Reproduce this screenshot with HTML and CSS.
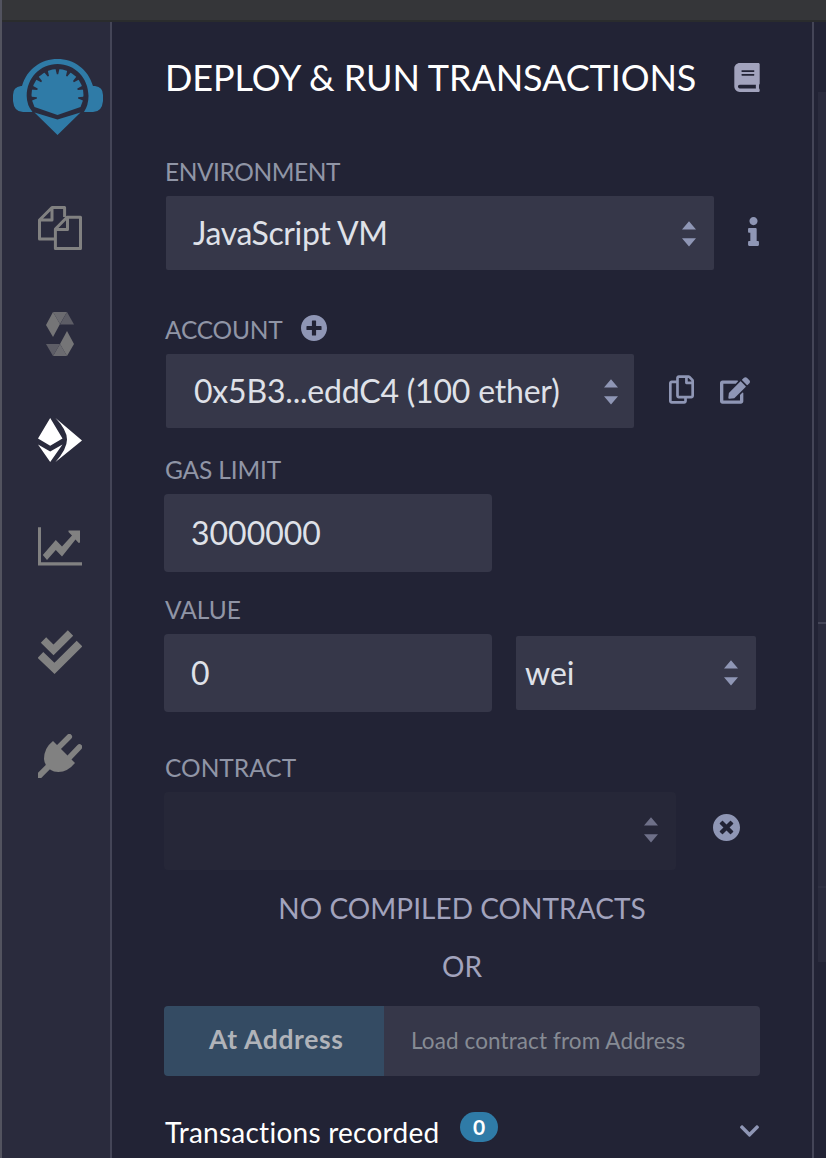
FILE: index.html
```
<!DOCTYPE html>
<html lang="en">
<head>
<meta charset="utf-8">
<title>Deploy &amp; Run Transactions</title>
<link rel="stylesheet" href="styles.css">
</head>
<body>
<svg class="defs" width="0" height="0">
  <defs>
    <symbol id="arrows" viewBox="0 0 14 26"><path d="M0 8.600L7 .2l7 8.400zM0 17.200h14L7 25.600z"/></symbol>
  </defs>
</svg>
<div class="app">
  <div class="topbar"></div>
  <div class="main">
    <nav class="sidebar">
      <svg class="logo" viewBox="0 0 90 77">
        <path d="M9 27C14 10 28 0 44.500 0S75 10 80 27h2q8 1 8 9v6q-1 11-10 11h-9q4.500-7 4.500-16C75.500 19 62 5 44.500 5S13.700 19 13.700 37q0 9 5.800 16H10Q1 53 0 42v-6q0-8 8-9z"/>
        <path d="M21.500 48Q18.500 42 18.500 36a26 26 0 0 1 52 0q0 6-3 12L44.500 56z"/>
        <path d="M21.500 53.500l23 7 23-7-23 22.500z"/>
        <g class="notches">
          <path id="n" d="M42.100 8h4.800l-1.700 7.200h-1.400z"/>
          <use href="#n" transform="rotate(26 44.500 36)"/><use href="#n" transform="rotate(-26 44.500 36)"/>
          <use href="#n" transform="rotate(50 44.500 36)"/><use href="#n" transform="rotate(-50 44.500 36)"/>
          <use href="#n" transform="rotate(74 44.500 36)"/><use href="#n" transform="rotate(-74 44.500 36)"/>
          <use href="#n" transform="rotate(98 44.500 36)"/><use href="#n" transform="rotate(-98 44.500 36)"/>
        </g>
      </svg>
      <svg class="nav" viewBox="0 0 44 44"><g fill="none" stroke="#818181" stroke-width="3" stroke-linejoin="round"><path d="M17 33H1.500V14L14 1.500h12.600V11M14 1.500V14H1.500"/><path d="M17.400 23L29 11.200h13.500v31.300H17.400zM29.500 11.200V23.500H17.400"/></g></svg>
      <svg class="nav" viewBox="0 0 44 44"><path fill="#757577" d="M15 0L22 12 15 25 8 13z"/><path fill="#6b6b70" d="M15 0h14l-7 12z"/><path fill="#5d5d66" d="M29 0l7 12.500H22z"/><path fill="#757577" d="M29 19l7 13-7 12-7-12z"/><path fill="#6b6b70" d="M22 32l7 12H15z"/><path fill="#5d5d66" d="M8 32h14l-7 12z"/></svg>
      <svg class="nav" viewBox="0 0 44 44"><path fill="#fff" d="M12.200 0L24.500 20.500l-12.300 7.300L0 20.500zM0 26.500l12.200 7L24.500 26.500 12.200 44zM17.500 0L44 22.400 17.500 44Q29 31 29 21.500T17.500 0z"/></svg>
      <svg class="nav" viewBox="0 0 44 44"><path fill="#818181" d="M0 3.300h3V38.300H44V41.500H0zM4.800 31L17.800 16l6.200 6.500L34 11.500 30.500 8V6.500H42V18.500l-1.300.5-3.200-3.500L24 32.500l-6.200-6.500L9 36z"/></svg>
      <svg class="nav nav-check" viewBox="0 0 44 44"><path fill="none" stroke="#818181" stroke-width="7.600" stroke-linejoin="miter" d="M5.500 10L15.500 20 32.500 3"/><path fill="none" stroke="#818181" stroke-width="8" d="M2.500 25L16.500 38.400 41.500 13.500"/></svg>
      <svg class="nav" viewBox="0 0 44 44"><path fill="none" stroke="#818181" stroke-width="5.500" stroke-linecap="round" d="M21 13L31.300 2.700M31.500 23.500L41.500 13"/><path fill="none" stroke="#818181" stroke-width="6" d="M-1 44L13 30"/><path fill="#818181" d="M15 7L37 29Q28 40 16 37.500 7 34 6 25 6 14 15 7z"/></svg>
    </nav>
    <main class="panel">
      <header class="head">
        <h1 class="title"><span class="t-title">DEPLOY &amp; RUN TRANSACTIONS</span></h1>
        <svg class="book" viewBox="0 0 448 512"><path d="M448 360V24c0-13.300-10.700-24-24-24H96C43 0 0 43 0 96v320c0 53 43 96 96 96h328c13.300 0 24-10.700 24-24v-16c0-7.500-3.500-14.300-8.900-18.700-4.200-15.400-4.200-59.300 0-74.700 5.400-4.300 8.900-11.100 8.900-18.600zM128 134c0-3.300 2.700-6 6-6h212c3.300 0 6 2.700 6 6v20c0 3.300-2.700 6-6 6H134c-3.300 0-6-2.700-6-6v-20zm0 64c0-3.300 2.700-6 6-6h212c3.300 0 6 2.700 6 6v20c0 3.300-2.700 6-6 6H134c-3.300 0-6-2.700-6-6v-20zm253.400 250H96c-17.700 0-32-14.300-32-32 0-17.600 14.400-32 32-32h285.400c-1.900 17.100-1.900 46.900 0 64z"/></svg>
      </header>

      <div class="label label-env"><span class="t-env">ENVIRONMENT</span></div>
      <div class="row">
        <div class="select select-env"><span class="t-js">JavaScript VM</span><svg class="arrows"><use href="#arrows"/></svg></div>
        <svg class="info" viewBox="0 0 192 512"><path d="M20 424.229h20V279.771H20c-11.046 0-20-8.954-20-20V212c0-11.046 8.954-20 20-20h112c11.046 0 20 8.954 20 20v212.229h20c11.046 0 20 8.954 20 20V492c0 11.046-8.954 20-20 20H20c-11.046 0-20-8.954-20-20v-47.771c0-11.046 8.954-20 20-20zM96 0C56.235 0 24 32.235 24 72s32.235 72 72 72 72-32.235 72-72S135.764 0 96 0z"/></svg>
      </div>

      <div class="label label-account"><span class="t-acc">ACCOUNT</span>
        <svg class="plus" viewBox="8 8 496 496"><path d="M256 8C119 8 8 119 8 256s111 248 248 248 248-111 248-248S393 8 256 8zm144 276c0 6.600-5.400 12-12 12h-92v92c0 6.600-5.400 12-12 12h-56c-6.600 0-12-5.400-12-12v-92h-92c-6.600 0-12-5.400-12-12v-56c0-6.600 5.400-12 12-12h92v-92c0-6.600 5.400-12 12-12h56c6.600 0 12 5.400 12 12v92h92c6.600 0 12 5.400 12 12v56z"/></svg>
      </div>
      <div class="row">
        <div class="select select-account"><span class="t-addr">0x5B3...eddC4 (100 ether)</span><svg class="arrows"><use href="#arrows"/></svg></div>
        <svg class="copy" viewBox="0 0 448 512"><path d="M433.941 65.941l-51.882-51.882A48 48 0 0 0 348.118 0H176c-26.510 0-48 21.490-48 48v48H48c-26.510 0-48 21.490-48 48v320c0 26.510 21.490 48 48 48h224c26.510 0 48-21.490 48-48v-48h80c26.510 0 48-21.490 48-48V99.882a48 48 0 0 0-14.059-33.941zM266 464H54a6 6 0 0 1-6-6V150a6 6 0 0 1 6-6h74v224c0 26.510 21.490 48 48 48h96v42a6 6 0 0 1-6 6zm128-96H182a6 6 0 0 1-6-6V54a6 6 0 0 1 6-6h106v88c0 13.255 10.745 24 24 24h88v202a6 6 0 0 1-6 6zm6-256h-64V48h9.632c1.591 0 3.117.632 4.243 1.757l48.368 48.368a6 6 0 0 1 1.757 4.243V112z"/></svg>
        <svg class="edit" viewBox="0 0 576 512"><path d="M402.600 83.200l90.200 90.200c3.800 3.800 3.800 10 0 13.800L274.400 405.600l-92.800 10.300c-12.400 1.400-22.900-9.100-21.500-21.500l10.300-92.800L388.800 83.200c3.800-3.800 10-3.800 13.800 0zm162-22.900l-48.800-48.800c-15.200-15.200-39.900-15.200-55.200 0l-35.400 35.400c-3.800 3.800-3.800 10 0 13.800l90.200 90.200c3.800 3.800 10 3.800 13.800 0l35.400-35.400c15.200-15.300 15.200-40 0-55.200zM384 346.200V448H64V128h229.800c3.200 0 6.200-1.300 8.500-3.500l40-40c7.600-7.600 2.200-20.500-8.500-20.500H48C21.500 64 0 85.500 0 112v352c0 26.500 21.500 48 48 48h352c26.500 0 48-21.500 48-48V306.200c0-10.700-12.900-16-20.500-8.500l-40 40c-2.200 2.300-3.500 5.300-3.500 8.500z"/></svg>
      </div>

      <div class="label label-gas"><span class="t-gas">GAS LIMIT</span></div>
      <div class="input"><span class="t-3m">3000000</span></div>

      <div class="label label-value"><span class="t-val">VALUE</span></div>
      <div class="row">
        <div class="input"><span>0</span></div>
        <div class="select select-unit"><span class="t-wei">wei</span><svg class="arrows"><use href="#arrows"/></svg></div>
      </div>

      <div class="label label-contract"><span class="t-con">CONTRACT</span></div>
      <div class="row">
        <div class="select select-contract"><svg class="arrows"><use href="#arrows"/></svg></div>
        <svg class="clear" viewBox="8 8 496 496"><path d="M256 8C119 8 8 119 8 256s111 248 248 248 248-111 248-248S393 8 256 8zm121.600 313.100c4.700 4.700 4.700 12.300 0 17L338 377.600c-4.700 4.700-12.300 4.700-17 0L256 312l-65.100 65.600c-4.700 4.700-12.300 4.700-17 0L134.400 338c-4.700-4.700-4.700-12.300 0-17l65.600-65-65.600-65.100c-4.700-4.700-4.700-12.300 0-17l39.600-39.600c4.700-4.700 12.300-4.700 17 0l65 65.700 65.100-65.600c4.700-4.700 12.300-4.700 17 0l39.600 39.600c4.700 4.700 4.700 12.300 0 17L312 256l65.600 65.100z"/></svg>
      </div>
      <div class="notes"><div class="note"><span class="t-no">NO COMPILED CONTRACTS</span></div><div class="note"><span class="t-or">OR</span></div></div>

      <div class="at">
        <div class="at-button"><span class="t-at">At Address</span></div>
        <div class="at-input"><span class="t-load">Load contract from Address</span></div>
      </div>

      <div class="recorded">
        <span class="t-rec">Transactions recorded</span>
        <span class="badge">0</span>
        <svg class="chevron" viewBox="5 123 438 266"><path d="M207.029 381.476L12.686 187.132c-9.373-9.373-9.373-24.569 0-33.941l22.667-22.667c9.357-9.357 24.522-9.375 33.901-.04L224 284.505l154.745-154.021c9.379-9.335 24.544-9.317 33.901.04l22.667 22.667c9.373 9.373 9.373 24.569 0 33.941L240.971 381.476c-9.373 9.372-24.569 9.372-33.942 0z"/></svg>
      </div>
    </main>
    <aside class="editor"><div class="block block-a"></div><div class="block block-b"></div><div class="block block-c"></div></aside>
  </div>
</div>
</body>
</html>
```

FILE: styles.css
```
* { box-sizing: border-box; }
body { margin: 0; background: #222335; font-family: Lato, "Noto Sans", sans-serif; font-variant-ligatures: none; color: #dfe1e8; }
.defs { display: block; position: absolute; }
svg { display: block; flex: none; }
span { white-space: nowrap; }
.app { width: 826px; height: 1158px; overflow: hidden; display: flex; flex-direction: column; border-left: 2px solid #52535f; }
.topbar { height: 22px; flex: none; background: #353639; border-bottom: 2px solid #2a2c2d; }
.main { display: flex; flex: 1; min-height: 0; }

.sidebar { width: 110px; flex: none; background: #2a2b3d; border-right: 2px solid #444557; display: flex; flex-direction: column; padding-top: 37px; }
.logo { width: 90px; height: 77px; margin: 0 0 70px 10.500px; fill: #2f7ba7; }
.notches { fill: #2a2b3d; }
.nav { width: 44px; height: 44px; margin: 0 0 62px 36px; overflow: hidden; }
.nav-check { margin-bottom: 60px; }

.panel { width: 702px; flex: none; border-right: 2px solid #444557; padding-left: 52px; fill: #8f96b5; }
.head { height: 112px; display: flex; align-items: center; }
.title { margin: -2px 0 0; width: 570px; padding-left: 1px; font-size: 36px; font-weight: 400; line-height: 44px; letter-spacing: -.1px; color: #fff; }
.book { width: 26px; height: 29px; margin-top: -1px; fill: #a2a3bd; }
.label { height: 48px; padding: 0 0 1px 1px; display: flex; align-items: center; font-size: 24.500px; line-height: 30px; color: #9095a6; }
.label-env { margin-top: 14px; }
.label-account { margin-top: 36px; }
.label-gas { margin-top: 18px; }
.label-value { margin-top: 14px; }
.label-contract { margin-top: 32px; }
.t-env { letter-spacing: -.45px; }
.t-acc { letter-spacing: -.2px; }
.t-gas { letter-spacing: -.15px; }
.plus { width: 26px; height: 26px; margin: -3px 0 0 18px; }
.row { display: flex; align-items: center; }
.select { height: 74px; background: #363749; border-radius: 2px; display: flex; align-items: center; justify-content: space-between; font-size: 32px; line-height: 40px; }
.arrows { width: 14px; height: 26px; margin: 1px 0 0 auto; }
.select-env { width: 548px; margin-left: 2px; padding: 0 18px 0 27px; }
.select-account { width: 468px; margin-left: 2px; padding: 0 16px 0 28px; }
.select-unit { width: 240px; margin-left: 24px; padding: 0 18px 0 9px; }
.select-unit .arrows, .select-account .arrows { margin-top: 0; margin-bottom: 1px; }
.select-account .arrows { margin-bottom: 0; margin-top: 1px; }
.select-contract { width: 512px; height: 78px; padding: 0 18px; background: #262738; border-radius: 4px; fill: #6e7088; }
.select-contract .arrows { margin-top: -2px; }
.t-js { letter-spacing: -.4px; }
.t-addr { letter-spacing: -.2px; }
.info { width: 11px; height: 29px; margin: -3px 0 0 34px; }
.copy { width: 25px; height: 29px; margin: -3px 0 0 35px; }
.edit { width: 30px; height: 27px; margin: -1px 0 0 26px; }
.clear { width: 27px; height: 27px; margin: -8px 0 0 37px; }
.input { width: 328px; height: 78px; padding-left: 27px; background: #363749; border-radius: 4px; display: flex; align-items: center; font-size: 32px; line-height: 40px; }
.notes { width: 596px; padding: 9px 0 11px; }
.note { height: 58px; display: flex; align-items: center; justify-content: center; font-size: 28px; line-height: 34px; letter-spacing: .05px; color: #a2a3bd; }
.at { width: 596px; height: 70px; display: flex; border-radius: 4px; overflow: hidden; }
.at-button { width: 220px; background: #344b63; color: #b0b3b9; font-size: 26.500px; font-weight: 700; letter-spacing: .65px; display: flex; align-items: center; padding: 0 0 4px 45px; }
.at-input { flex: 1; background: #363749; color: #868b94; font-size: 22.500px; letter-spacing: .1px; display: flex; align-items: center; padding: 0 0 2px 27px; }
.recorded { width: 596px; margin-top: 28px; height: 54px; padding-left: 1px; display: flex; align-items: center; font-size: 28px; line-height: 34px; color: #fff; }
.t-rec { width: 277px; margin-top: 1px; letter-spacing: .25px; }
.badge { width: 38px; height: 30px; margin: -8px 0 0 18px; border-radius: 15px; background: #2f7ba7; font-size: 21px; font-weight: 700; line-height: 30px; text-align: center; }
.chevron { width: 19px; height: 12px; margin: -1px 1px 0 auto; }

.editor { flex: 1; padding: 70px 0 0 4px; }
.block { background: #2a2b3d; }
.block-a { height: 530px; }
.block-b { height: 264px; border-top: 2px solid #444557; }
.block-c { height: 76px; border-top: 2px solid #2f3042; }
```
